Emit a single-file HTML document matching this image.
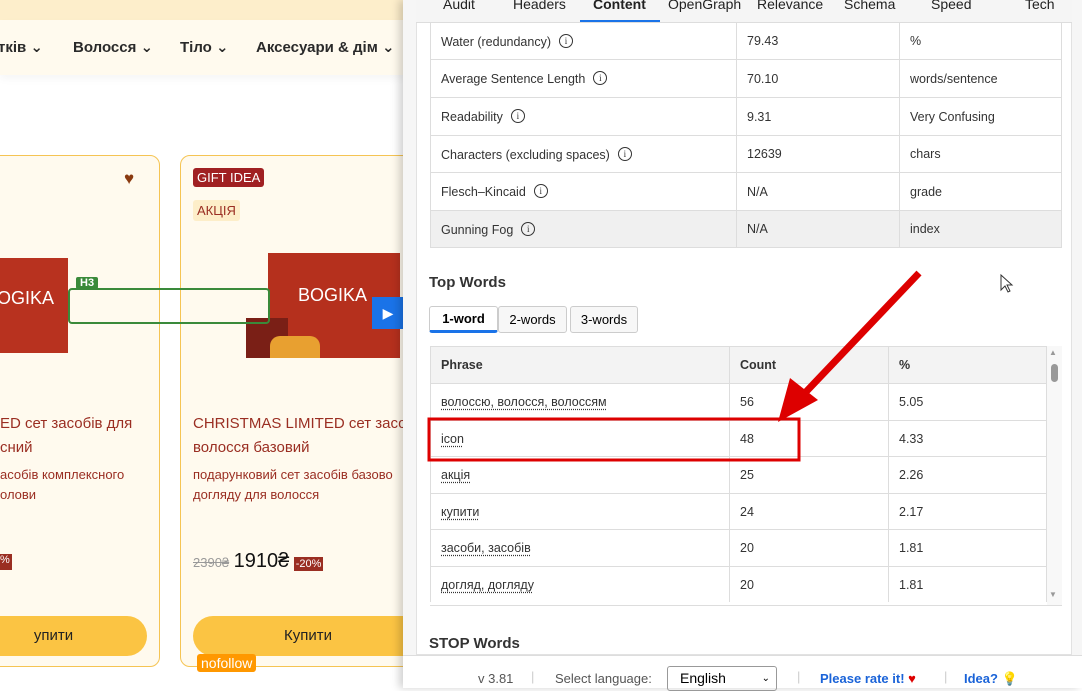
<!DOCTYPE html>
<html><head><meta charset="utf-8"><style>
*{box-sizing:border-box;margin:0;padding:0}
body{width:1082px;height:688px;overflow:hidden;position:relative;font-family:"Liberation Sans","DejaVu Sans",sans-serif;background:#fff}
.abs{position:absolute}
.top{left:0;top:0;width:410px;height:20px;background:#fdeecb}
.nav{left:0;top:20px;width:410px;height:55px;background:#fffaee;box-shadow:0 4px 8px rgba(0,0,0,.04)}
.nav span{position:absolute;top:18px;font-size:15px;font-weight:bold;color:#2a2a2a}
.card{background:#fffaee;border:1px solid #f5c453;border-radius:10px}
.t{color:#9a2e22;font-size:15px;line-height:24px}
.d{color:#9a2e22;font-size:13px;line-height:20px}
.btn{background:#fbc443;border-radius:20px;height:40px;font-size:15px;text-align:center;line-height:40px;color:#222}
.panel{left:403px;top:0;width:679px;height:688px;background:#f6f6f6;box-shadow:-4px 0 8px rgba(0,0,0,.18)}
.tabs span{position:absolute;top:-4px;font-size:14px;color:#222}
table{border-collapse:collapse;position:absolute;font-size:12.5px;color:#333}
td,th{border:1px solid #ddd;padding:0 10px;text-align:left}
.i{display:inline-block;width:14px;height:14px;border:1px solid #333;border-radius:50%;font-size:9px;text-align:center;line-height:12px;margin-left:8px;vertical-align:2px;font-family:"Liberation Serif",serif}
u{text-decoration:underline dotted;text-underline-offset:3px}
</style></head><body>
<div class="abs top"></div>
<div class="abs nav">
<span style="left:-2px">тків ⌄</span><span style="left:73px">Волосся ⌄</span><span style="left:180px">Тіло ⌄</span><span style="left:256px">Аксесуари &amp; дім ⌄</span>
</div>
<div class="abs card" style="left:-20px;top:155px;width:180px;height:512px"></div>
<div class="abs" style="left:124px;top:169px;color:#8a3a10;font-size:17px">♥</div>
<div class="abs" style="left:-10px;top:258px;width:78px;height:95px;background:#b8321f"></div>
<div class="abs" style="left:-3px;top:288px;color:#fff;font-size:18px">OGIKA</div>
<div class="abs t" style="left:0;top:412px;white-space:nowrap">ED сет засобів для<br>сний</div>
<div class="abs d" style="left:0;top:465px">асобів комплексного<br>олови</div>
<div class="abs" style="left:0;top:554px;width:12px;height:16px;background:#9a2e22;color:#fff;font-size:11px">%</div>
<div class="abs btn" style="left:-40px;top:616px;width:187px">упити</div>
<div class="abs card" style="left:180px;top:155px;width:240px;height:512px"></div>
<div class="abs" style="left:193px;top:168px;background:#a02022;color:#fff;font-size:13px;padding:2px 4px;border-radius:3px">GIFT IDEA</div>
<div class="abs" style="left:193px;top:200px;background:#fdeec9;color:#9a2e22;font-size:13px;padding:3px 4px;border-radius:3px">АКЦІЯ</div>
<div class="abs" style="left:268px;top:253px;width:132px;height:105px;background:#b5301d"></div>
<div class="abs" style="left:298px;top:285px;color:#fff;font-size:18px">BOGIKA</div>
<div class="abs" style="left:246px;top:318px;width:42px;height:40px;background:#7a1f16"></div>
<div class="abs" style="left:270px;top:336px;width:50px;height:22px;background:#e8a030;border-radius:10px 10px 0 0"></div>
<div class="abs" style="left:68px;top:288px;width:202px;height:36px;border:2px solid #3a8a3a;border-radius:4px"></div>
<div class="abs" style="left:76px;top:277px;background:#3a8a3a;color:#fff;font-size:11px;font-weight:bold;padding:0 4px;border-radius:2px">H3</div>
<div class="abs" style="left:372px;top:297px;width:32px;height:32px;background:#1a73e8;color:#fff;font-size:14px;text-align:center;line-height:32px">▶</div>
<div class="abs t" style="left:193px;top:412px;white-space:nowrap">CHRISTMAS LIMITED сет засо<br>волосся базовий</div>
<div class="abs d" style="left:193px;top:465px;white-space:nowrap">подарунковий сет засобів базово<br>догляду для волосся</div>
<div class="abs" style="left:193px;top:550px;white-space:nowrap"><s style="color:#999;font-size:13px">2390₴</s> <span style="font-size:20px;color:#111">1910₴</span> <span style="background:#9a2e22;color:#fff;font-size:11px;padding:1px 2px">-20%</span></div>
<div class="abs btn" style="left:193px;top:616px;width:230px">Купити</div>
<div class="abs" style="left:197px;top:654px;background:#ff9800;color:#fff;font-size:14px;padding:1px 4px;border-radius:3px">nofollow</div>

<div class="abs panel">
<div class="abs" style="left:13px;top:0;width:656px;height:655px;background:#fff;border:1px solid #e2e2e2;border-top:none"></div>
<div class="abs tabs" style="left:13px;top:0;width:656px;height:23px;background:#f5f5f5;border-bottom:1px solid #ddd">
<span style="left:27px">Audit</span><span style="left:97px">Headers</span><span style="left:177px;font-weight:bold">Content</span><span style="left:252px">OpenGraph</span><span style="left:341px">Relevance</span><span style="left:428px">Schema</span><span style="left:515px">Speed</span><span style="left:609px">Tech</span>
<div class="abs" style="left:164px;top:20px;width:80px;height:3px;background:#1a73e8"></div>
</div>
<table style="left:27px;top:22px;width:632px">
<tr style="height:37px"><td style="width:306px">Water (redundancy)<span class="i">i</span></td><td style="width:163px">79.43</td><td>%</td></tr>
<tr style="height:38px"><td>Average Sentence Length<span class="i">i</span></td><td>70.10</td><td>words/sentence</td></tr>
<tr style="height:38px"><td>Readability<span class="i">i</span></td><td>9.31</td><td>Very Confusing</td></tr>
<tr style="height:37px"><td>Characters (excluding spaces)<span class="i">i</span></td><td>12639</td><td>chars</td></tr>
<tr style="height:38px"><td>Flesch–Kincaid<span class="i">i</span></td><td>N/A</td><td>grade</td></tr>
<tr style="height:37px;background:#f0f0f0"><td>Gunning Fog<span class="i">i</span></td><td>N/A</td><td>index</td></tr>
</table>
<div class="abs" style="left:26px;top:274px;font-size:15px;font-weight:bold;color:#333">Top Words</div>
<div class="abs" style="left:26px;top:306px;width:69px;height:27px;border:1px solid #ccc;border-bottom:3px solid #1a73e8;border-radius:3px;font-size:13px;font-weight:bold;text-align:center;line-height:24px">1-word</div>
<div class="abs" style="left:95px;top:306px;width:69px;height:27px;border:1px solid #ccc;border-radius:3px;font-size:13px;text-align:center;line-height:26px;background:#f7f7f7">2-words</div>
<div class="abs" style="left:167px;top:306px;width:68px;height:27px;border:1px solid #ccc;border-radius:3px;font-size:13px;text-align:center;line-height:26px;background:#f7f7f7">3-words</div>
<table style="left:27px;top:346px;width:617px">
<tr style="height:37px;background:#f3f3f3"><th style="width:299px">Phrase</th><th style="width:159px">Count</th><th>%</th></tr>
<tr style="height:37px"><td><u>волоссю, волосся, волоссям</u></td><td>56</td><td>5.05</td></tr>
<tr style="height:36px"><td><u>icon</u></td><td>48</td><td>4.33</td></tr>
<tr style="height:37px"><td><u>акція</u></td><td>25</td><td>2.26</td></tr>
<tr style="height:36px"><td><u>купити</u></td><td>24</td><td>2.17</td></tr>
<tr style="height:37px"><td><u>засоби, засобів</u></td><td>20</td><td>1.81</td></tr>
<tr style="height:36px"><td><u>догляд, догляду</u></td><td>20</td><td>1.81</td></tr>
</table>
<div class="abs" style="left:27px;top:602px;width:632px;height:4px;border-bottom:1px solid #ddd;background:#fff"></div>
<div class="abs" style="left:644px;top:346px;width:15px;height:259px;background:#f8f8f8"></div>
<div class="abs" style="left:648px;top:364px;width:7px;height:18px;background:#999;border-radius:4px"></div>
<div class="abs" style="left:646px;top:348px;font-size:8px;color:#999">▲</div>
<div class="abs" style="left:646px;top:590px;font-size:8px;color:#999">▼</div>
<div class="abs" style="left:26px;top:635px;font-size:15px;font-weight:bold;color:#333">STOP Words</div>
<div class="abs" style="left:0;top:655px;width:679px;height:33px;background:#fff;border-top:1px solid #ddd;font-size:13px;color:#555">
<span class="abs" style="left:75px;top:15px">v 3.81</span><span class="abs" style="left:128px;top:13px;color:#ccc">|</span>
<span class="abs" style="left:152px;top:15px">Select language:</span>
<span class="abs" style="left:264px;top:10px;width:110px;height:25px;border:1px solid #999;border-radius:3px;color:#000;font-size:14px;padding:3px 12px">English<span style="position:absolute;right:6px;font-size:10px;top:6px">⌄</span></span>
<span class="abs" style="left:394px;top:13px;color:#ccc">|</span>
<span class="abs" style="left:417px;top:15px;color:#1a63d8;font-weight:bold">Please rate it! <span style="color:#d00">♥</span></span>
<span class="abs" style="left:541px;top:13px;color:#ccc">|</span>
<span class="abs" style="left:561px;top:15px;color:#1a63d8;font-weight:bold">Idea? <span style="color:#e8b020">💡</span></span>
</div>
</div>
<svg class="abs" style="left:0;top:0" width="1082" height="688">
<rect x="429" y="419" width="370" height="41" fill="none" stroke="#d00" stroke-width="3"/>
<line x1="919" y1="273" x2="803" y2="395" stroke="#d00" stroke-width="7"/>
<polygon points="778,422 790,378 818,400" fill="#d00"/>
<path d="M1001 275 L1001 290 L1005 286 L1008 292 L1010 291 L1007 285 L1012 285 Z" fill="#fff" stroke="#333" stroke-width="1"/>
</svg>
</body></html>
